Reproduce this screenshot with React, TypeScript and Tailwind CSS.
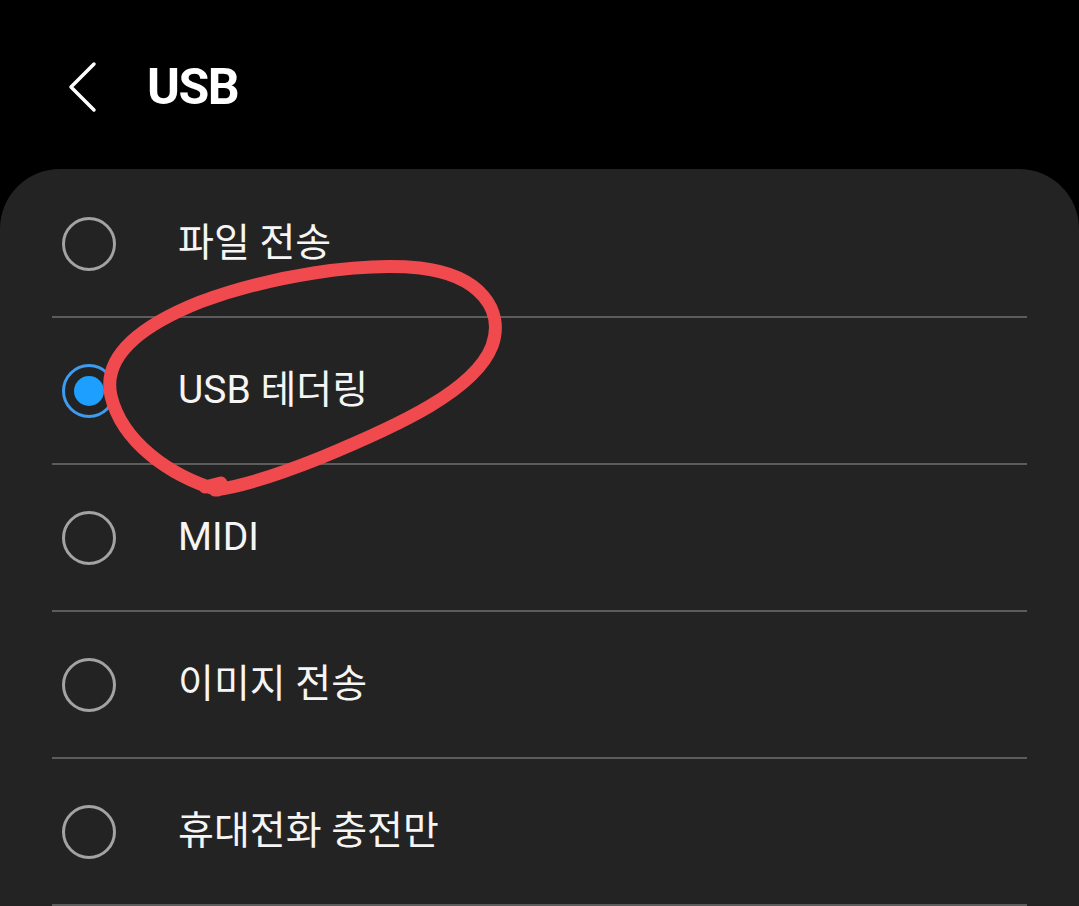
const options = [
  { label: "파일 전송", selected: false },
  { label: "USB 테더링", selected: true },
  { label: "MIDI", selected: false },
  { label: "이미지 전송", selected: false },
  { label: "휴대전화 충전만", selected: false },
];

const Radio = ({ selected }: { selected: boolean }) =>
  selected ? (
    <div className="w-[54px] h-[54px] rounded-full border-[3px] border-[#3d9cf0] flex items-center justify-center">
      <div className="w-[30px] h-[30px] rounded-full bg-[#1c9fff]" />
    </div>
  ) : (
    <div className="w-[54px] h-[54px] rounded-full border-[3px] border-[#a3a3a3]" />
  );

export default function App() {
  return (
    <div
      className="relative w-[1079px] h-[906px] overflow-hidden bg-black text-white"
      style={{ fontFamily: 'Roboto, "Noto Sans CJK KR", sans-serif' }}
    >
      {/* header */}
      <header className="h-[169px] flex items-center pl-[66px] pt-[4px]">
        <svg width="34" height="52" viewBox="0 0 34 52" fill="none">
          <path d="M28 3 L5 26 L28 49" stroke="white" strokeWidth="3.5" strokeLinecap="round" strokeLinejoin="round" />
        </svg>
        <h1 className="ml-[47px] text-[50px] font-bold tracking-[-1.5px] leading-none">USB</h1>
      </header>

      {/* card */}
      <div className="bg-[#232323] rounded-t-[60px] h-[737px] pt-[2px]">
        {options.map((o) => (
          <div key={o.label}>
            <div className="h-[145px] flex items-center pl-[62px]">
              <Radio selected={o.selected} />
              <span className="ml-[62px] text-[39px] leading-none text-[#f5f5f5]">{o.label}</span>
            </div>
            <div className="mx-[52px] h-[2px] bg-[#5c5c5c]" />
          </div>
        ))}
      </div>

      {/* hand-drawn red annotation */}
      <svg className="absolute inset-0 pointer-events-none" width="1079" height="906" viewBox="0 0 1079 906" fill="none">
        <path
          d="M218 490 C170 476 122 442 111 396 C102 356 140 326 200 302 C270 276 360 262 420 268 C480 275 505 310 492 346 C475 390 400 425 320 458 C280 474 245 486 215 490 M205 487 L221 483"
          stroke="#f04a4f"
          strokeWidth="13"
          strokeLinecap="round"
          strokeLinejoin="round"
        />
      </svg>
    </div>
  );
}
